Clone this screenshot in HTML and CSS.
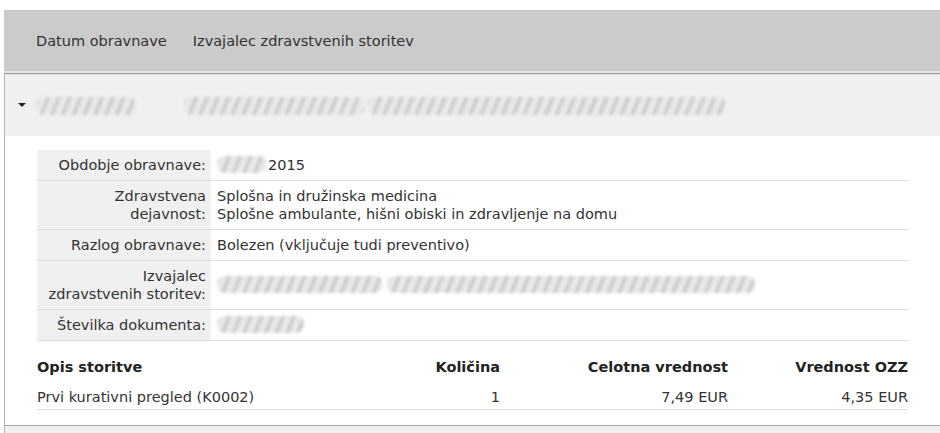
FILE: index.html
```html
<!DOCTYPE html>
<html lang="sl">
<head>
  <meta charset="UTF-8" />
  <meta name="viewport" content="width=device-width, initial-scale=1.0"/>
  <title>Obravnave</title>
  <link rel="stylesheet" href="styles.css">
</head>
<body>

  <div class="results">
    <div class="results-head">
      <span>Datum obravnave</span>
      <span>Izvajalec zdravstvenih storitev</span>
    </div>

    <div class="entry">
      <div class="entry-toggle">
        <span class="caret"></span>
        <span class="blur blur-date"></span>
        <span class="blur blur-word1"></span>
        <span class="blur blur-word2"></span>
      </div>

      <div class="entry-body">
        <table class="details">
          <tr>
            <th>Obdobje obravnave:</th>
            <td><span class="blur blur-day"></span>2015</td>
          </tr>
          <tr>
            <th>Zdravstvena<br>dejavnost:</th>
            <td>Splošna in družinska medicina<br>Splošne ambulante, hišni obiski in zdravljenje na domu</td>
          </tr>
          <tr>
            <th>Razlog obravnave:</th>
            <td>Bolezen (vključuje tudi preventivo)</td>
          </tr>
          <tr>
            <th>Izvajalec<br>zdravstvenih storitev:</th>
            <td><span class="blur blur-prov1"></span><span class="blur blur-prov2"></span></td>
          </tr>
          <tr>
            <th>Številka dokumenta:</th>
            <td><span class="blur blur-doc"></span></td>
          </tr>
        </table>

        <table class="services">
          <colgroup>
            <col>
            <col class="col-qty">
            <col class="col-total">
            <col class="col-ozz">
          </colgroup>
          <thead>
            <tr>
              <th>Opis storitve</th>
              <th class="num">Količina</th>
              <th class="num">Celotna vrednost</th>
              <th class="num">Vrednost OZZ</th>
            </tr>
          </thead>
          <tbody>
            <tr>
              <td>Prvi kurativni pregled (K0002)</td>
              <td class="num">1</td>
              <td class="num">7,49 EUR</td>
              <td class="num">4,35 EUR</td>
            </tr>
          </tbody>
        </table>
      </div>
    </div>

    <div class="entry entry-next"></div>
  </div>

</body>
</html>
```

FILE: styles.css
```css
* {
  box-sizing: border-box;
  margin: 0;
  padding: 0;
}

body {
  font-family: Verdana, "DejaVu Sans", sans-serif;
  font-size: 14.5px;
  line-height: 18px;
  color: #333;
  background: #fff;
  padding: 10px 0 0 4px;
  overflow: hidden;
}

/* column header bar */
.results-head {
  display: flex;
  align-items: center;
  gap: 26px;
  height: 63px;
  padding-left: 32px;
  background: #cbcbcb;
  border-top: 1px solid #c2c2c2;
  border-bottom: 2px solid #e6e6e6;
}

.entry {
  border-left: 1px solid #b4b4b4;
  border-top: 1px solid #9c9c9c;
}

.entry-toggle {
  display: flex;
  align-items: center;
  height: 62px;
  padding-left: 13px;
  background: #f0f0f0;
  border-top: 1px solid #e2e2e2;
}

.caret {
  width: 0;
  height: 0;
  border-left: 4px solid transparent;
  border-right: 4px solid transparent;
  border-top: 4px solid #222;
  margin-right: 10px;
  margin-top: -2px;
}

/* anonymised values */
.blur {
  display: inline-block;
  height: 18px;
  border-radius: 8px;
  background: repeating-linear-gradient(112deg, #c2c2c2 0 2px, #d8d8d8 2px 4px, #e9e9e9 4px 10px);
  filter: blur(1.4px);
  vertical-align: middle;
}

.blur-date { width: 100px; }
.blur-word1 { width: 180px; margin-left: 48px; }
.blur-word2 { width: 358px; margin-left: 4px; }

.entry-body {
  background: #fff;
  padding: 14px 32px 15px 32px;
}

table {
  width: 100%;
  border-collapse: collapse;
}

.details th,
.details td {
  padding: 6px 6px;
  border-bottom: 1px solid #ddd;
  vertical-align: middle;
  font-weight: normal;
}

.details th {
  width: 174px;
  padding-right: 5px;
  text-align: right;
  background: #f0f0f0;
}

.details td .blur {
  height: 17px;
  vertical-align: top;
}

.blur-day { width: 50px; margin-right: 1px; }
.blur-prov1 { width: 166px; margin-right: 4px; }
.blur-prov2 { width: 368px; }
.blur-doc { width: 87px; }

.services {
  table-layout: fixed;
  margin-top: 11px;
}

.services .col-qty { width: 130px; }
.services .col-total { width: 228px; }
.services .col-ozz { width: 180px; }

.services th,
.services td {
  padding: 0;
  text-align: left;
}

.services th {
  padding: 6px 0;
  font-weight: bold;
  color: #222;
}

.services td {
  padding: 6px 0 3px;
  border-bottom: 1px solid #ddd;
}

.services .num {
  text-align: right;
}

.entry-next {
  height: 10px;
  border-top: 1px solid #a8a8a8;
  background: #f0f0f0;
}
```
